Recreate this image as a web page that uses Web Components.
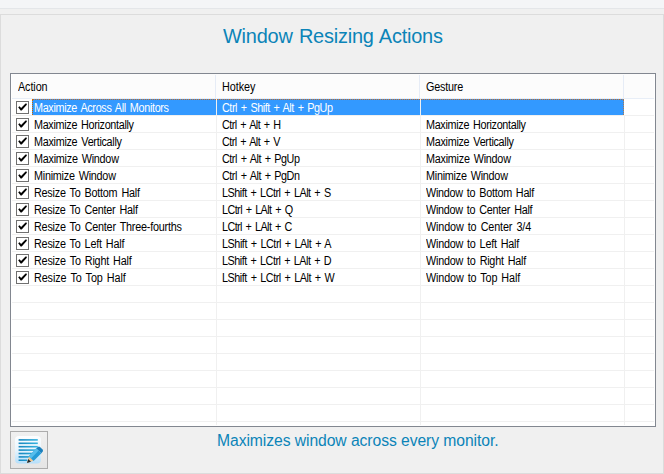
<!DOCTYPE html>
<html lang="en">
<head>
<meta charset="utf-8">
<title>Window Resizing Actions</title>
<style>
html,body{margin:0;height:474px;overflow:hidden;background:#f0f0f0;font-family:"Liberation Sans",Arial,sans-serif}
</style>
</head>
<body>
<resize-page></resize-page>
<script>
// Single line of text, condensed by a factor, whose letter spacing is tuned to a given width.
class FitText extends HTMLElement {
  connectedCallback() {
    const root = this.attachShadow({mode: 'open'});
    root.innerHTML = '<style>:host{display:block;white-space:pre;width:max-content;transform-origin:0 0}</style><span><slot></slot></span>';
    const span = root.querySelector('span');
    const scale = parseFloat(this.getAttribute('scale') || '0.9');
    const target = parseFloat(this.getAttribute('width')) / scale;
    const n = this.textContent.length;
    const natural = span.getBoundingClientRect().width;
    this.style.letterSpacing = ((target - natural) / n).toFixed(3) + 'px';
    this.style.transform = `scaleX(${scale})`;
  }
}
customElements.define('fit-text', FitText);

class CheckBox extends HTMLElement {
  connectedCallback() {
    this.attachShadow({mode: 'open'}).innerHTML = `
      <style>:host{display:block;width:13px;height:13px;flex:none}svg{display:block}</style>
      <svg width="13" height="13" viewBox="0 0 13 13">
        <rect x=".5" y=".5" width="12" height="12" fill="#fff" stroke="#707070"/>
        <path d="M2.2 6.2 3.6 5.3 5.1 7.1 9.5 2.6 11 2.7 10.6 4 5.7 9.6 4.6 9.6Z" fill="#000"/>
      </svg>`;
  }
}
customElements.define('check-box', CheckBox);

class ActionRow extends HTMLElement {
  connectedCallback() {
    this.attachShadow({mode: 'open'}).innerHTML = `
      <style>
        :host{display:grid;grid-template-columns:205px 204px 204px 1fr;height:17px;box-sizing:border-box;
          border-bottom:1px solid #f0f0f0;font-size:12px;line-height:16px;color:#000;word-spacing:1.4px}
        .c{display:flex;border-right:1px solid #f0f0f0;height:16px;box-sizing:border-box;padding:1px 0 0 5px}
        .action{padding:0 0 0 4px}
        .rest{border:0}
        .box{padding-top:2px;width:13px;flex:none}
        .label{flex:1;padding:1px 0 0 5px;height:16px;box-sizing:border-box}
        :host([selected]) .label,:host([selected]) .sel{color:#fff;
          background:repeating-linear-gradient(90deg,#c06a26 0 1px,#3399ff 1px 2px) 0 0/100% 1px no-repeat #3399ff}
        :host([selected]) .label{border-left:1px dotted #cc6600;padding-left:1px;margin-left:3px}
        :host([selected]) .last{margin-right:1px;border-right:1px dotted #b0784a}
      </style>
      <div class="c action"><div class="box"><slot name="check"></slot></div><div class="label"><slot name="action"></slot></div></div>
      <div class="c sel"><slot name="hotkey"></slot></div>
      <div class="c sel last"><slot name="gesture"></slot></div>
      <div class="c rest"></div>`;
  }
}
customElements.define('action-row', ActionRow);

class ActionTable extends HTMLElement {
  connectedCallback() {
    const data = [
      ['Maximize Across All Monitors',134.7,'Ctrl + Shift + Alt + PgUp',110.5,'',0],
      ['Maximize Horizontally',99.7,'Ctrl + Alt + H',58.5,'Maximize Horizontally',99.7],
      ['Maximize Vertically',87.7,'Ctrl + Alt + V',58,'Maximize Vertically',87.7],
      ['Maximize Window',84.7,'Ctrl + Alt + PgUp',77.5,'Maximize Window',84.7],
      ['Minimize Window',81.7,'Ctrl + Alt + PgDn',77.5,'Minimize Window',81.7],
      ['Resize To Bottom Half',105.7,'LShift + LCtrl + LAlt + S',108.7,'Window to Bottom Half',108],
      ['Resize To Center Half',103.7,'LCtrl + LAlt + Q',70.5,'Window to Center Half',106.3],
      ['Resize To Center Three-fourths',147.7,'LCtrl + LAlt + C',69.7,'Window to Center 3/4',105],
      ['Resize To Left Half',90.2,'LShift + LCtrl + LAlt + A',109,'Window to Left Half',93],
      ['Resize To Right Half',97.5,'LShift + LCtrl + LAlt + D',109.2,'Window to Right Half',100],
      ['Resize To Top Half',91.7,'LShift + LCtrl + LAlt + W',112.2,'Window to Top Half',94]
    ];
    const cell = (slot, text, w) => text ? `<fit-text slot="${slot}" width="${w}">${text}</fit-text>` : '';
    let rows = data.map((d, i) => `<action-row${i ? '' : ' selected'}><check-box slot="check"></check-box>${
      cell('action', d[0], d[1])}${cell('hotkey', d[2], d[3])}${cell('gesture', d[4], d[5])}</action-row>`).join('');
    rows += '<action-row></action-row>'.repeat(8);
    this.attachShadow({mode: 'open'}).innerHTML = `
      <style>
        :host{display:block;box-sizing:border-box;width:646px;height:354px;border:1px solid #828790;background:#fff;padding:0 1px 1px}
        .head{display:grid;grid-template-columns:204px 204px 204px 1fr;height:24px;border-bottom:1px solid #e8eef7;
          background:#fcfcfc;font-size:12px;line-height:25px}
        .head div{border-right:1px solid #e6ecf6;padding-left:5.5px;margin-top:1px;height:23px;box-sizing:border-box}
        .head .rest{border:0}
        .foot{display:grid;grid-template-columns:205px 204px 204px 1fr;height:3px}
        .foot div{border-right:1px solid #f0f0f0}
        .foot .rest{border:0}
      </style>
      <div class="head"><div><fit-text width="29.5">Action</fit-text></div><div><fit-text width="33.5">Hotkey</fit-text></div><div><fit-text width="37">Gesture</fit-text></div><div class="rest"></div></div>
      ${rows}
      <div class="foot"><div></div><div></div><div></div><div class="rest"></div></div>`;
  }
}
customElements.define('action-table', ActionTable);

class EditButton extends HTMLElement {
  connectedCallback() {
    this.attachShadow({mode: 'open'}).innerHTML = `
      <style>
        :host{display:block;box-sizing:border-box;width:38px;height:38px;border:1px solid #acacac;background:linear-gradient(#f0f0f0,#e5e5e5)}
        svg{display:block}
      </style>
      <svg width="36" height="36" viewBox="11 432 36 36">
        <defs>
          <linearGradient id="p" x1="0" y1="0" x2="0" y2="1"><stop offset="0" stop-color="#fdfeff"/><stop offset=".5" stop-color="#e9f5fd"/><stop offset="1" stop-color="#b5dffa"/></linearGradient>
          <linearGradient id="l" gradientUnits="userSpaceOnUse" x1="18" y1="0" x2="38" y2="0"><stop offset="0" stop-color="#1685bd"/><stop offset="1" stop-color="#37b4e0"/></linearGradient>
        </defs>
        <rect x="15" y="436" width="26" height="27.5" rx="4" fill="url(#p)"/>
        <g fill="url(#l)">
          <rect x="18.6" y="439.1" width="19.2" height="1.6"/><rect x="18.6" y="442.5" width="19.2" height="1.6"/>
          <rect x="18.6" y="445.9" width="19.2" height="1.6"/><rect x="18.6" y="449.3" width="17" height="1.6"/>
          <rect x="18.6" y="452.7" width="14" height="1.6"/><rect x="18.6" y="456.1" width="11" height="1.6"/>
          <rect x="18.6" y="459.5" width="8.5" height="1.5"/>
        </g>
        <path d="M27 463 29 456.3 33.6 460.8Z" fill="#f3c58f"/>
        <path d="M27 463 28.2 459 31 461.8Z" fill="#252a2d"/>
        <path d="M28.8 456.3 36.4 448.3 41.4 453.2 33.6 461Z" fill="#259bd6"/>
        <path d="M28.8 456.3 36.4 448.3 38.7 450.6 31.1 458.5Z" fill="#55bdec"/>
        <path d="M36.4 448.3 37.9 446.9 Q39 446.2 40 447.1 L42.6 449.5 Q43.4 450.5 42.7 451.6 L41.4 453.2Z" fill="#1b80bd"/>
      </svg>`;
  }
}
customElements.define('edit-button', EditButton);

class ResizePage extends HTMLElement {
  connectedCallback() {
    this.attachShadow({mode: 'open'}).innerHTML = `
      <style>
        :host{display:flex;flex-direction:column;width:664px;height:474px;background:#f0f0f0}
        .top{height:8px;background:#f4f5f7;border-bottom:1px solid #e4e6e9;margin-bottom:5px;flex:none}
        main{flex:1;box-sizing:border-box;border:1px solid #dcdcdc;padding:0 7px 0 9px}
        h1{margin:0;height:58px;padding:9px 0 0 213px;box-sizing:border-box;font-size:21px;font-weight:400;line-height:24px;color:#0b84b8;word-spacing:1px}
        footer{display:flex;padding-top:4px}
        p{margin:0 0 0 168.5px;padding-top:1px;font-size:16px;line-height:18px;color:#0b84b8}
      </style>
      <div class="top"></div>
      <main>
        <h1><fit-text width="219.7" scale=".95">Window Resizing Actions</fit-text></h1>
        <action-table></action-table>
        <footer><edit-button></edit-button><p><fit-text width="281.5" scale=".98">Maximizes window across every monitor.</fit-text></p></footer>
      </main>`;
  }
}
customElements.define('resize-page', ResizePage);
</script>
</body>
</html>
